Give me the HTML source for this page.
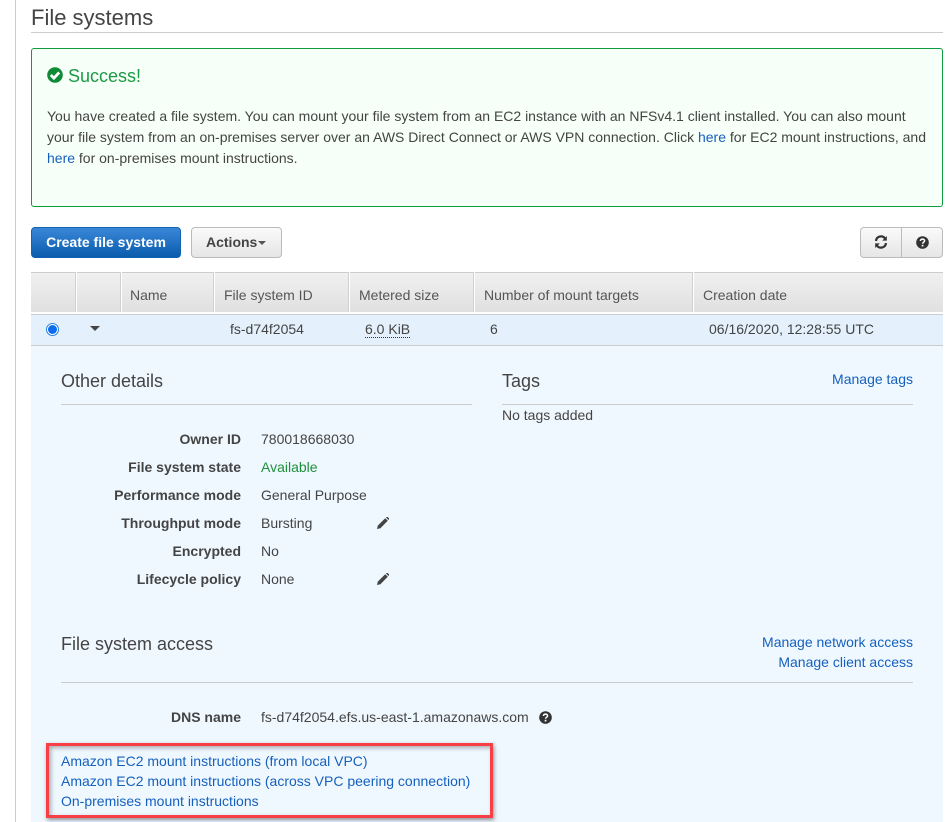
<!DOCTYPE html>
<html><head><meta charset="utf-8"><style>
html,body{margin:0;padding:0;background:#fff;}
body{width:949px;height:822px;position:relative;overflow:hidden;font-family:"Liberation Sans",Arial,sans-serif;font-size:14px;color:#444;}
.t{position:absolute;white-space:nowrap;line-height:20px;}
.r{text-align:right;font-weight:bold;width:200px;left:41px;}
a,.l{color:#1560bd;text-decoration:none;}
.b{position:absolute;}
.h{font-size:18px;color:#444;}
.th{position:absolute;top:272px;height:40px;background:linear-gradient(#f0f0f0,#e0e0e0);border-top:1px solid #ccc;border-right:1px solid #d0d0d0;box-sizing:border-box;}
.thx{position:absolute;top:286px;line-height:18px;color:#555;font-size:14px;white-space:nowrap;}
</style></head><body>
<div class="b" style="left:15px;top:0;width:1px;height:822px;background:#ccc"></div>
<div class="t" style="left:31px;top:4px;font-size:22px;line-height:28px;color:#444">File systems</div>
<div class="b" style="left:31px;top:32px;width:912px;height:1px;background:#ccc"></div>

<div class="b" style="left:31px;top:48px;width:912px;height:159px;box-sizing:border-box;background:#f6fff8;border:1px solid #0d9d3f;border-radius:3px"></div>
<svg class="b" style="left:47px;top:67px" width="16" height="16" viewBox="0 0 16 16"><circle cx="8" cy="8" r="7.800" fill="#0f8a36"/><path d="M3.800 8l3.100 3.100 5.300-5.600" fill="none" stroke="#fff" stroke-width="2.800"/></svg>
<div class="t" style="left:68px;top:65px;font-size:18px;line-height:22px;color:#1d9a45">Success!</div>
<div class="t" style="left:47px;top:106px;line-height:21px">You have created a file system. You can mount your file system from an EC2 instance with an NFSv4.1 client installed. You can also mount<br>your file system from an on-premises server over an AWS Direct Connect or AWS VPN connection. Click <a>here</a> for EC2 mount instructions, and<br><a>here</a> for on-premises mount instructions.</div>

<div class="b" style="left:31px;top:227px;width:150px;height:31px;box-sizing:border-box;background:linear-gradient(#3a87d8,#0a5cad);border:1px solid #1262b3;border-radius:4px;color:#fff;font-weight:bold;text-align:center;line-height:29px;">Create file system</div>
<div class="b" style="left:191px;top:227px;width:91px;height:31px;box-sizing:border-box;background:linear-gradient(#fafafa,#e6e6e6);border:1px solid #bbb;border-radius:4px;color:#444;font-weight:bold;line-height:29px;padding-left:14px;">Actions<span style="display:inline-block;border:4px solid transparent;border-top-color:#555;border-bottom:0;vertical-align:middle;margin-left:1px"></span></div>

<div class="b" style="left:860px;top:227px;width:83px;height:31px;box-sizing:border-box;background:linear-gradient(#fafafa,#e6e6e6);border:1px solid #bbb;border-radius:4px;"></div>
<div class="b" style="left:901px;top:228px;width:1px;height:29px;background:#bbb"></div>
<svg class="b" style="left:874px;top:235px" width="14" height="14" viewBox="0 0 14 14"><path d="M2 6A5 5 0 0 1 11 3.400" fill="none" stroke="#333" stroke-width="2.200"/><path d="M12.800 1v4.600H8.200z" fill="#333"/><path d="M12 8A5 5 0 0 1 3 10.600" fill="none" stroke="#333" stroke-width="2.200"/><path d="M1.200 13V8.400h4.600z" fill="#333"/></svg>
<svg class="b" style="left:916px;top:236px" width="13" height="13" viewBox="0 0 13 13"><circle cx="6.500" cy="6.500" r="6.300" fill="#333"/><path d="M4.400 5c.1-1.300 1-1.900 2.100-1.900s2.100.6 2.100 1.700c0 1.400-2 1.400-2 2.900" fill="none" stroke="#fff" stroke-width="1.500"/><rect x="5.700" y="8.800" width="1.700" height="1.700" fill="#fff"/></svg>

<div class="th" style="left:31px;width:45px"></div>
<div class="th" style="left:77px;width:44px"></div>
<div class="th" style="left:122px;width:92px"></div>
<div class="th" style="left:215px;width:134px"></div>
<div class="th" style="left:350px;width:124px"></div>
<div class="th" style="left:475px;width:218px"></div>
<div class="th" style="left:694px;width:249px;border-right:0"></div>
<div class="thx" style="left:130px">Name</div>
<div class="thx" style="left:224px">File system ID</div>
<div class="thx" style="left:359px">Metered size</div>
<div class="thx" style="left:484px">Number of mount targets</div>
<div class="thx" style="left:703px">Creation date</div>

<div class="b" style="left:31px;top:314px;width:912px;height:508px;background:#f0f8ff"></div>
<div class="b" style="left:31px;top:314px;width:912px;height:32px;box-sizing:border-box;background:#e4f1fc;border-top:1px solid #ccc;border-bottom:1px solid #ccc"></div>
<div class="b" style="left:46px;top:323px;width:13px;height:13px;box-sizing:border-box;border:1px solid #2a7fe0;border-radius:50%;background:#fff"></div>
<div class="b" style="left:48px;top:325px;width:9px;height:9px;border-radius:50%;background:#0a6cf0"></div>
<div class="b" style="left:90px;top:326px;width:0;height:0;border:5px solid transparent;border-top:5.500px solid #444;border-bottom:0"></div>
<div class="t" style="left:230px;top:319px">fs-d74f2054</div>
<div class="t" style="left:365px;top:319px;border-bottom:1px dotted #333;height:18px">6.0 KiB</div>
<div class="t" style="left:490px;top:319px">6</div>
<div class="t" style="left:709px;top:319px">06/16/2020, 12:28:55 UTC</div>

<div class="t h" style="left:61px;top:370px;line-height:22px">Other details</div>
<div class="b" style="left:61px;top:404px;width:411px;height:1px;background:#ccc"></div>
<div class="t h" style="left:502px;top:370px;line-height:22px">Tags</div>
<div class="b" style="left:502px;top:404px;width:411px;height:1px;background:#ccc"></div>
<a class="t" style="right:36px;top:369px">Manage tags</a>
<div class="t" style="left:502px;top:405px">No tags added</div>

<div class="t r" style="top:429px">Owner ID</div><div class="t" style="left:261px;top:429px">780018668030</div>
<div class="t r" style="top:457px">File system state</div><div class="t" style="left:261px;top:457px;color:#1d8f3c">Available</div>
<div class="t r" style="top:485px">Performance mode</div><div class="t" style="left:261px;top:485px">General Purpose</div>
<div class="t r" style="top:513px">Throughput mode</div><div class="t" style="left:261px;top:513px">Bursting</div>
<div class="t r" style="top:541px">Encrypted</div><div class="t" style="left:261px;top:541px">No</div>
<div class="t r" style="top:569px">Lifecycle policy</div><div class="t" style="left:261px;top:569px">None</div>
<svg class="b" style="left:377px;top:517px" width="12" height="12" viewBox="0 0 12 12"><path d="M0 12l.8-3.400L8.200 1.200l2.600 2.600-7.400 7.400zM9 .6l.6-.6q.5-.3 1 0l1.400 1.400q.3.500 0 1l-.6.600z" fill="#444"/></svg>
<svg class="b" style="left:377px;top:573px" width="12" height="12" viewBox="0 0 12 12"><path d="M0 12l.8-3.400L8.200 1.200l2.600 2.600-7.400 7.400zM9 .6l.6-.6q.5-.3 1 0l1.400 1.400q.3.500 0 1l-.6.600z" fill="#444"/></svg>

<div class="t h" style="left:61px;top:633px;line-height:22px">File system access</div>
<a class="t" style="right:36px;top:632px">Manage network access</a>
<a class="t" style="right:36px;top:652px">Manage client access</a>
<div class="b" style="left:61px;top:682px;width:852px;height:1px;background:#ccc"></div>
<div class="t r" style="top:707px">DNS name</div><div class="t" style="left:261px;top:707px">fs-d74f2054.efs.us-east-1.amazonaws.com</div>
<svg class="b" style="left:539px;top:711px" width="13" height="13" viewBox="0 0 13 13"><circle cx="6.500" cy="6.500" r="6.300" fill="#333"/><path d="M4.400 5c.1-1.300 1-1.900 2.100-1.900s2.100.6 2.100 1.700c0 1.400-2 1.400-2 2.900" fill="none" stroke="#fff" stroke-width="1.500"/><rect x="5.700" y="8.800" width="1.700" height="1.700" fill="#fff"/></svg>

<div class="b" style="left:46px;top:743px;width:447px;height:75px;box-sizing:border-box;border:3px solid #f64046;box-shadow:1px 2px 4px rgba(60,60,60,.55), inset 2px 2px 4px rgba(60,60,60,.4)"></div>
<a class="t" style="left:61px;top:751px">Amazon EC2 mount instructions (from local VPC)</a>
<a class="t" style="left:61px;top:771px">Amazon EC2 mount instructions (across VPC peering connection)</a>
<a class="t" style="left:61px;top:791px">On-premises mount instructions</a>
</body></html>
